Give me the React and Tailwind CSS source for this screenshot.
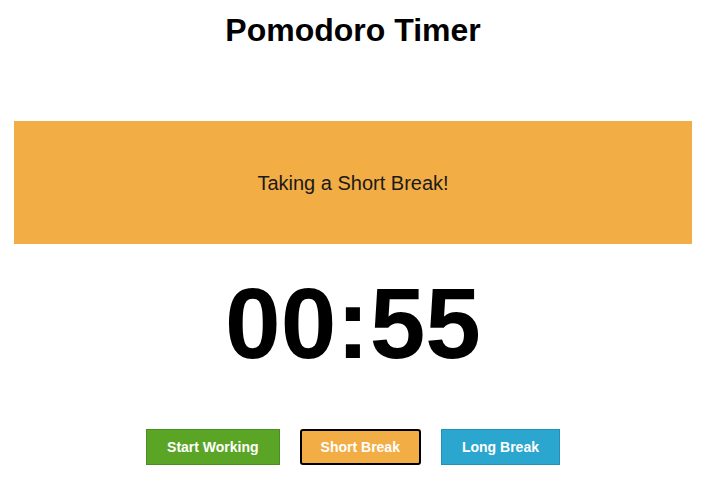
export default function App() {
  const font = { fontFamily: '"Liberation Sans", Arial, sans-serif' };

  return (
    <div className="min-h-screen w-[706px] bg-white text-black" style={font}>
      <h1 className="mt-[12px] text-center text-[32px] font-bold leading-[37px]">
        Pomodoro Timer
      </h1>

      <div className="mx-[14px] mt-[72px] flex h-[123px] items-center justify-center bg-[#f3ad45]">
        <p className="text-[20px] text-[#1a1a1a]">Taking a Short Break!</p>
      </div>

      <div className="mt-[22px] text-center text-[100px] font-bold leading-[115px]">
        00:55
      </div>

      <div className="mt-[48px] flex justify-center gap-5">
        <button className="flex h-[36px] items-center border border-[#4b8d1f] bg-[#5ba526] px-5 text-[14px] font-bold text-white">
          Start Working
        </button>
        <button className="flex h-[36px] items-center rounded-[3px] border-2 border-black bg-[#f3ad45] px-[19px] text-[14px] font-bold text-white">
          Short Break
        </button>
        <button className="flex h-[36px] items-center border border-[#2390b6] bg-[#2aa6cf] px-5 text-[14px] font-bold text-white">
          Long Break
        </button>
      </div>
    </div>
  );
}
